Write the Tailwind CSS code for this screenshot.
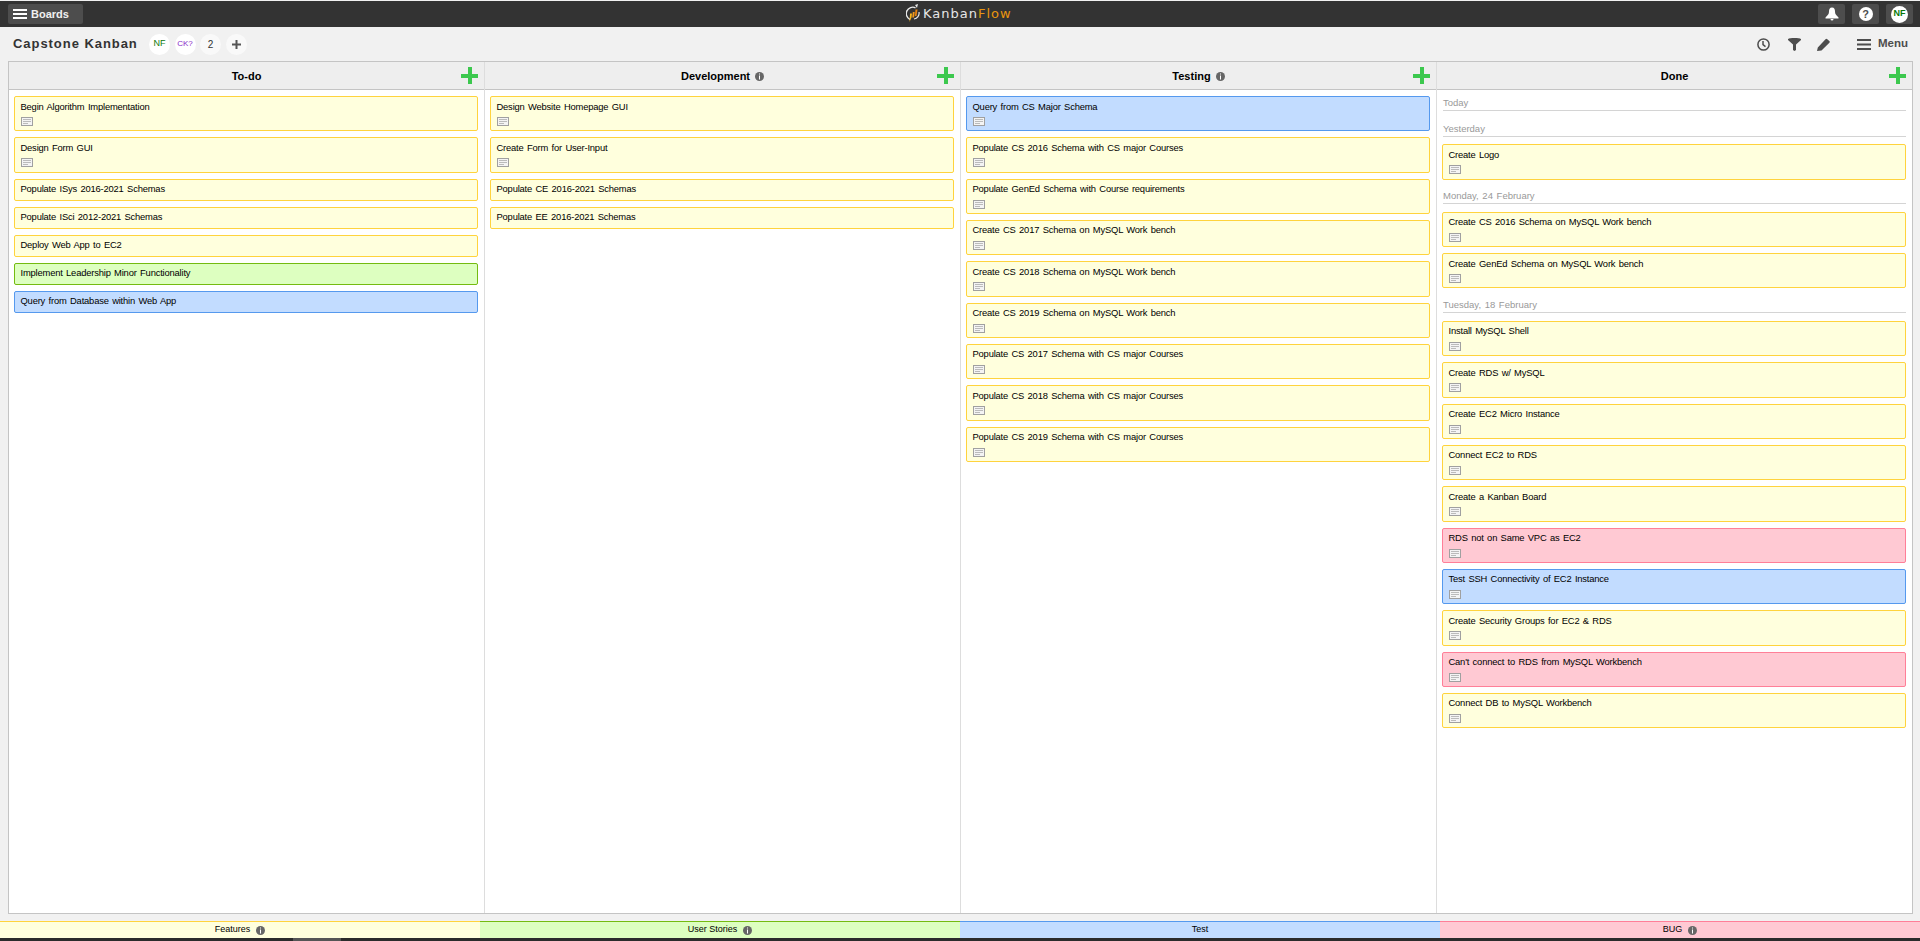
<!DOCTYPE html>
<html lang="en">
<head>
    <meta charset="UTF-8">
    <title>Capstone Kanban - KanbanFlow</title>
    <script src="https://cdn.jsdelivr.net/npm/@tailwindcss/browser@4"></script>
</head>
<body class="h-[941px] overflow-hidden bg-[#f1f1f1] font-['Liberation_Sans',Arial,sans-serif] text-black">

    <!-- Top bar -->
    <header class="relative mt-px flex h-[26px] items-center justify-between bg-[#333333] pl-2 pr-[7px]">
        <a class="flex h-5 w-[75px] items-center gap-[4px] rounded-[2px] bg-[#4d4d4d] pl-[5px] text-[11px] font-bold text-[#f0f0f0]">
            <svg width="14" height="10" viewBox="0 0 14 10" fill="#fff"><rect width="14" height="2"/><rect y="4" width="14" height="2"/><rect y="8" width="14" height="2"/></svg>
            Boards
        </a>
        <div class="absolute left-[906px] top-[3px] flex items-center gap-[3px]">
            <svg width="14" height="19" viewBox="0 0 14 19">
                <path d="M9.500 3.800A6 6 0 1 0 4 15.500" fill="none" stroke="#e8e8e8" stroke-width="1.400"/>
                <path d="M9 1l3-1-1 4z" fill="#e8e8e8"/>
                <path d="M8 15A6 6 0 0 0 13 8" fill="none" stroke="#e8e8e8" stroke-width="1.200"/>
                <path d="M4 9.500h2l-.5 4-2 4.500z" fill="#f7b51c"/>
                <path d="M6.800 8h1.900l-.6 5.500H6.300z" fill="#f39a1d"/>
                <path d="M9.500 5.500h2l-1 6.500H8.900z" fill="#e8830f"/>
            </svg>
            <span class="font-['DejaVu_Sans',sans-serif] text-[13px] tracking-[1px] text-[#e6e6e6]">Kanban<span class="text-[#e8950f]">Flow</span></span>
        </div>
        <div class="flex gap-[7px]">
            <div class="flex h-5 w-[27px] items-center justify-center rounded-[2px] bg-[#4d4d4d]">
                <svg width="14" height="14" viewBox="0 0 14 14" fill="#fff"><path d="M7 .5c2.300 0 3 1.800 3 4 0 2.500 1 3.500 3.500 6v1H.5v-1c2.500-2.500 3.500-3.500 3.500-6 0-2.200.7-4 3-4z"/><path d="M5.500 12h3a1.500 1.500 0 0 1-3 0z"/></svg>
            </div>
            <div class="flex h-5 w-[27px] items-center justify-center rounded-[2px] bg-[#4d4d4d]">
                <span class="flex size-[14px] items-center justify-center rounded-full bg-white text-[11px] font-bold text-[#4d4d4d]">?</span>
            </div>
            <div class="flex h-5 w-[27px] items-center justify-center rounded-[2px] bg-[#4d4d4d]">
                <span class="flex size-[17px] items-center justify-center rounded-full bg-white text-[9px] font-bold text-[#0a7a0a]">NF</span>
            </div>
        </div>
    </header>

    <!-- Board title row -->
    <div class="flex h-[34px] items-center pl-[13px] pr-[12px]">
        <h1 class="w-[136px] text-[13px] font-bold tracking-[0.95px] text-[#333333]">Capstone Kanban</h1>
        <div class="flex gap-[4.500px]">
            <span class="flex size-[21px] items-center justify-center rounded-full bg-white text-[9px] text-[#0a7a0a]">NF</span>
            <span class="flex size-[21px] items-center justify-center rounded-full bg-white text-[8px] text-[#8a2bc9]">CK?</span>
            <span class="flex size-[21px] items-center justify-center rounded-full bg-[#f9f9f9] text-[10px] text-[#333333]">2</span>
            <span class="flex size-[21px] items-center justify-center rounded-full bg-[#f9f9f9]">
                <svg width="9" height="9" viewBox="0 0 9 9" fill="#555"><path d="M3.500 0h2v3.500H9v2H5.500V9h-2V5.500H0v-2h3.500z"/></svg>
            </span>
        </div>
        <div class="ml-auto flex items-center">
            <svg width="13" height="13" viewBox="0 0 13 13" fill="none" stroke="#4d4d4d" stroke-width="1.500"><circle cx="6.500" cy="6.500" r="5.600"/><path d="M6 3v3.700l2.500 2"/></svg>
            <svg class="ml-[18px]" width="13" height="13" viewBox="0 0 13 13" fill="#4d4d4d"><path d="M0 1.200C0 .4 3 0 6.500 0S13 .4 13 1.200v.8L8 6.500V12l-1.500 1L5 12V6.500L0 2z"/></svg>
            <svg class="ml-4" width="13" height="13" viewBox="0 0 13 13" fill="#4d4d4d"><path d="M0 13l.8-3.500L8.500 1.300a1.300 1.300 0 0 1 1.800-.1l2 1.700a1.300 1.300 0 0 1 .1 1.800L4.500 12.500z"/></svg>
            <svg class="ml-[27px]" width="14" height="11" viewBox="0 0 14 11" fill="#4d4d4d"><rect width="14" height="2"/><rect y="4.500" width="14" height="2"/><rect y="9" width="14" height="2"/></svg>
            <span class="ml-[7px] text-[11.500px] font-bold text-[#4d4d4d]">Menu</span>
        </div>
    </div>

    <!-- Board -->
    <main class="ml-2 mr-[7px] flex h-[853px] border border-[#c4c4c4] bg-white">
        <section class="w-[476px] border-r border-[#dddddd]">
            <div class="relative flex h-[28px] items-center justify-center border-b border-[#c4c4c4] bg-[#eeeeee] pt-px text-[11px] font-bold">
                To-do
                <span class="absolute right-[6px] top-[5px] size-[17px] bg-[linear-gradient(#3cc84e,#3cc84e),linear-gradient(#3cc84e,#3cc84e)] bg-[length:17px_4px,4px_17px] bg-center bg-no-repeat"></span>
            </div>
            <div id="todo" class="flex flex-col gap-[6px] pl-[5px] pr-[6px] pt-[6px]"></div>
        </section>
        <section class="w-[476px] border-r border-[#dddddd]">
            <div class="relative flex h-[28px] items-center justify-center gap-[5px] border-b border-[#c4c4c4] bg-[#eeeeee] pt-px text-[11px] font-bold">
                Development
                <svg width="9" height="9" viewBox="0 0 9 9"><circle cx="4.500" cy="4.500" r="4.500" fill="#666"/><path d="M4 1.500h1v1H4zM4 3.500h1v4H4z" fill="#fff"/></svg>
                <span class="absolute right-[6px] top-[5px] size-[17px] bg-[linear-gradient(#3cc84e,#3cc84e),linear-gradient(#3cc84e,#3cc84e)] bg-[length:17px_4px,4px_17px] bg-center bg-no-repeat"></span>
            </div>
            <div id="development" class="flex flex-col gap-[6px] pl-[5px] pr-[6px] pt-[6px]"></div>
        </section>
        <section class="w-[476px] border-r border-[#dddddd]">
            <div class="relative flex h-[28px] items-center justify-center gap-[5px] border-b border-[#c4c4c4] bg-[#eeeeee] pt-px text-[11px] font-bold">
                Testing
                <svg width="9" height="9" viewBox="0 0 9 9"><circle cx="4.500" cy="4.500" r="4.500" fill="#666"/><path d="M4 1.500h1v1H4zM4 3.500h1v4H4z" fill="#fff"/></svg>
                <span class="absolute right-[6px] top-[5px] size-[17px] bg-[linear-gradient(#3cc84e,#3cc84e),linear-gradient(#3cc84e,#3cc84e)] bg-[length:17px_4px,4px_17px] bg-center bg-no-repeat"></span>
            </div>
            <div id="testing" class="flex flex-col gap-[6px] pl-[5px] pr-[6px] pt-[6px]"></div>
        </section>
        <section class="flex-1">
            <div class="relative flex h-[28px] items-center justify-center border-b border-[#c4c4c4] bg-[#eeeeee] pt-px text-[11px] font-bold">
                Done
                <span class="absolute right-[6px] top-[5px] size-[17px] bg-[linear-gradient(#3cc84e,#3cc84e),linear-gradient(#3cc84e,#3cc84e)] bg-[length:17px_4px,4px_17px] bg-center bg-no-repeat"></span>
            </div>
            <div class="pl-[5px] pr-[6px] pt-[7px]">
                <h2 class="mb-3 ml-px border-b border-[#d4d4d4] pb-px text-[9.500px] leading-[12px] text-[#999999] [word-spacing:1px]">Today</h2>
                <h2 class="mb-[7.300px] ml-px border-b border-[#d4d4d4] pb-px text-[9.500px] leading-[12px] text-[#999999] [word-spacing:1px]">Yesterday</h2>
                <div id="done-yesterday" class="flex flex-col gap-[6px]"></div>
                <h2 class="mb-[7.600px] ml-px mt-[10.500px] border-b border-[#d4d4d4] pb-px text-[9.500px] leading-[12px] text-[#999999] [word-spacing:1px]">Monday, 24 February</h2>
                <div id="done-monday" class="flex flex-col gap-[6px]"></div>
                <h2 class="mb-[8.100px] ml-px mt-[10.500px] border-b border-[#d4d4d4] pb-px text-[9.500px] leading-[12px] text-[#999999] [word-spacing:1px]">Tuesday, 18 February</h2>
                <div id="done-tuesday" class="flex flex-col gap-[6px]"></div>
            </div>
        </section>
    </main>

    <!-- Swimlane legend -->
    <footer class="mt-[7px] grid h-[17px] grid-cols-4 text-[9px]">
        <div class="flex items-center justify-center gap-[6px] border-t border-[#ffd33d] bg-[#ffffdd]">Features
            <svg width="9" height="9" viewBox="0 0 9 9"><circle cx="4.500" cy="4.500" r="4.500" fill="#666"/><path d="M4 1.500h1v1H4zM4 3.500h1v4H4z" fill="#fff"/></svg>
        </div>
        <div class="flex items-center justify-center gap-[6px] border-t border-[#74bb10] bg-[#ddffc0]">User Stories
            <svg width="9" height="9" viewBox="0 0 9 9"><circle cx="4.500" cy="4.500" r="4.500" fill="#666"/><path d="M4 1.500h1v1H4zM4 3.500h1v4H4z" fill="#fff"/></svg>
        </div>
        <div class="flex items-center justify-center border-t border-[#5599ee] bg-[#c2dcff]">Test</div>
        <div class="flex items-center justify-center gap-[6px] border-t border-[#ff7f98] bg-[#ffc9d3]">BUG
            <svg width="9" height="9" viewBox="0 0 9 9"><circle cx="4.500" cy="4.500" r="4.500" fill="#666"/><path d="M4 1.500h1v1H4zM4 3.500h1v4H4z" fill="#fff"/></svg>
        </div>
    </footer>
    <div class="h-[3px] bg-[#2b2b2b] pl-[293px]"><div class="h-full w-[48px] bg-[#555555]"></div></div>

    <script>
        const colors = {
            y: "border-[#ffd33d] bg-[#ffffdd]",
            g: "border-[#74bb10] bg-[#ddffc0]",
            b: "border-[#5599ee] bg-[#c2dcff]",
            r: "border-[#ff7f98] bg-[#ffc9d3]"
        };
        const noteIcon = `<svg class="mt-[4.500px] block" width="12" height="9" viewBox="0 0 12 9"><rect x=".5" y=".5" width="11" height="8" fill="#f4f4f4" stroke="#a0a0a0"/><path d="M2 2.500h8M2 4.500h8" stroke="#bbb"/><path d="M2 6.500h5" stroke="#bbb"/></svg>`;

        // [title, colour, has a description icon]
        const board = {
            "todo": [
                ["Begin Algorithm Implementation", "y", 1],
                ["Design Form GUI", "y", 1],
                ["Populate ISys 2016-2021 Schemas", "y"],
                ["Populate ISci 2012-2021 Schemas", "y"],
                ["Deploy Web App to EC2", "y"],
                ["Implement Leadership Minor Functionality", "g"],
                ["Query from Database within Web App", "b"]
            ],
            "development": [
                ["Design Website Homepage GUI", "y", 1],
                ["Create Form for User-Input", "y", 1],
                ["Populate CE 2016-2021 Schemas", "y"],
                ["Populate EE 2016-2021 Schemas", "y"]
            ],
            "testing": [
                ["Query from CS Major Schema", "b", 1],
                ["Populate CS 2016 Schema with CS major Courses", "y", 1],
                ["Populate GenEd Schema with Course requirements", "y", 1],
                ["Create CS 2017 Schema on MySQL Work bench", "y", 1],
                ["Create CS 2018 Schema on MySQL Work bench", "y", 1],
                ["Create CS 2019 Schema on MySQL Work bench", "y", 1],
                ["Populate CS 2017 Schema with CS major Courses", "y", 1],
                ["Populate CS 2018 Schema with CS major Courses", "y", 1],
                ["Populate CS 2019 Schema with CS major Courses", "y", 1]
            ],
            "done-yesterday": [["Create Logo", "y", 1]],
            "done-monday": [
                ["Create CS 2016 Schema on MySQL Work bench", "y", 1],
                ["Create GenEd Schema on MySQL Work bench", "y", 1]
            ],
            "done-tuesday": [
                ["Install MySQL Shell", "y", 1],
                ["Create RDS w/ MySQL", "y", 1],
                ["Create EC2 Micro Instance", "y", 1],
                ["Connect EC2 to RDS", "y", 1],
                ["Create a Kanban Board", "y", 1],
                ["RDS not on Same VPC as EC2", "r", 1],
                ["Test SSH Connectivity of EC2 Instance", "b", 1],
                ["Create Security Groups for EC2 & RDS", "y", 1],
                ["Can't connect to RDS from MySQL Workbench", "r", 1],
                ["Connect DB to MySQL Workbench", "y", 1]
            ]
        };

        Object.keys(board).forEach(id => {
            let rows = "";
            board[id].forEach(task => {
                const height = task[2] ? "h-[35.330px]" : "h-[22px]";
                rows += `<div class="${height} ${colors[task[1]]} rounded-[2px] border px-[5.500px] pt-[3.500px] text-[9.400px] leading-[12px] tracking-[-0.18px] [word-spacing:1px]">
                    ${task[0].replace("&", "&amp;")}${task[2] ? noteIcon : ""}
                </div>`;
            });
            document.getElementById(id).innerHTML = rows;
        });
    </script>
</body>
</html>
